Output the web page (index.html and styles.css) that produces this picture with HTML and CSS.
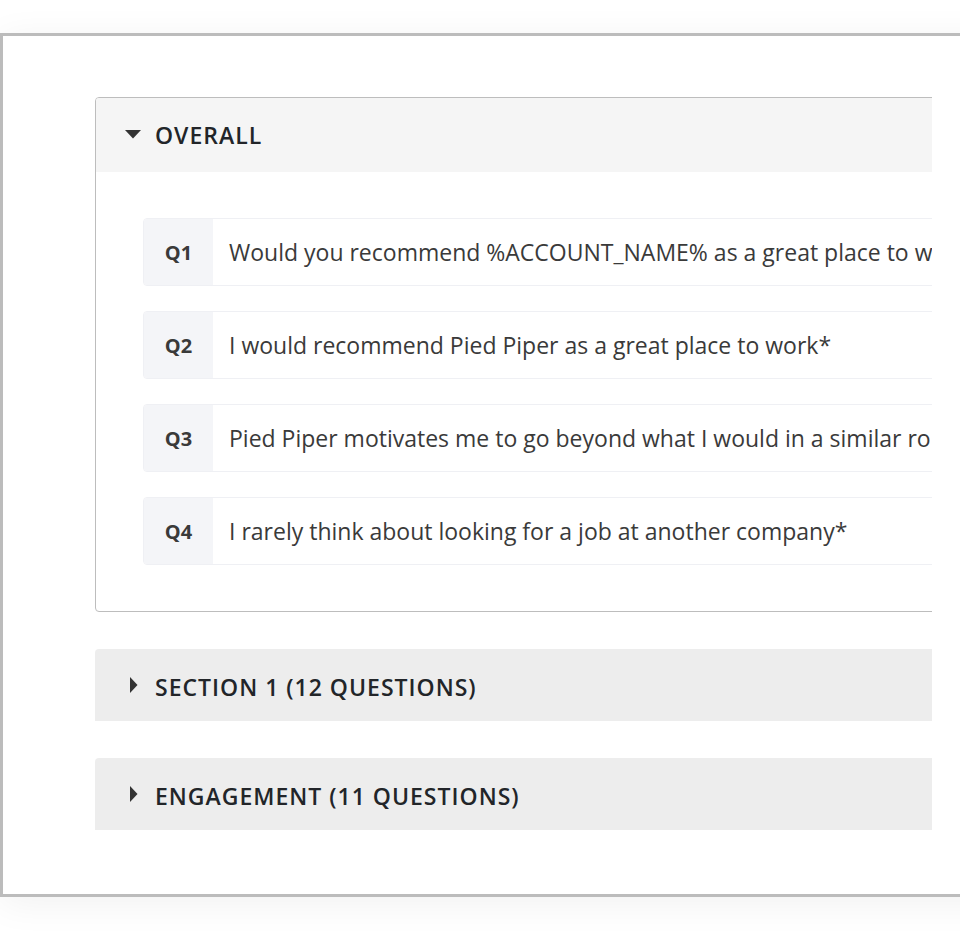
FILE: index.html
```html
<!DOCTYPE html>
<html>
<head>
<meta charset="utf-8">
<link rel="stylesheet" href="styles.css">
</head>
<body>
<div class="card">
  <div class="clip">
    <div class="panel open">
      <div class="panel-head">
        <svg class="caret-down" width="16" height="9" viewBox="0 0 16 9"><path d="M0 0H16L8 8.5Z" fill="#333"/></svg>
        <span class="panel-title">OVERALL</span>
      </div>
      <div class="panel-body">
        <div class="q-row"><div class="q-num">Q1</div><div class="q-text">Would you recommend %ACCOUNT_NAME% as a great place to work*</div></div>
        <div class="q-row"><div class="q-num">Q2</div><div class="q-text">I would recommend Pied Piper as a great place to work*</div></div>
        <div class="q-row"><div class="q-num">Q3</div><div class="q-text">Pied Piper motivates me to go beyond what I would in a similar role elsewhere*</div></div>
        <div class="q-row"><div class="q-num">Q4</div><div class="q-text">I rarely think about looking for a job at another company*</div></div>
      </div>
    </div>
    <div class="section">
      <svg class="caret-right" width="8" height="16" viewBox="0 0 8 16"><path d="M0 0V16L7.5 8Z" fill="#333"/></svg>
      <span class="panel-title">SECTION 1 (12 QUESTIONS)</span>
    </div>
    <div class="section">
      <svg class="caret-right" width="8" height="16" viewBox="0 0 8 16"><path d="M0 0V16L7.5 8Z" fill="#333"/></svg>
      <span class="panel-title">ENGAGEMENT (11 QUESTIONS)</span>
    </div>
  </div>
</div>
</body>
</html>
```
FILE: styles.css
```css
html, body {
  margin: 0;
  padding: 0;
  background: #ffffff;
  overflow: hidden;
  height: 948px;
}
body {
  font-family: "Open Sans", "Noto Sans", sans-serif;
  color: #333;
}
.card {
  margin-top: 33px;
  width: 1100px;
  border: 3px solid #bcbcbc;
  background: #fff;
  box-shadow: 0 6px 36px rgba(0, 0, 0, 0.06);
  padding: 61px 0 64px 92px;
  box-sizing: border-box;
}
.clip {
  width: 837px;
  overflow: hidden;
  display: flex;
  flex-direction: column;
  gap: 37px;
}
.panel {
  width: 1000px;
  border: 1px solid #bdbdbd;
  border-radius: 4px;
  overflow: hidden;
  flex-shrink: 0;
}
.panel-head {
  height: 74px;
  background: #f5f5f5;
  display: flex;
  align-items: center;
  padding-left: 29px;
  box-sizing: border-box;
}
.caret-down {
  margin-right: 14px;
  margin-top: -2px;
}
.panel-title {
  font-size: 23px;
  font-weight: 600;
  letter-spacing: 1px;
  color: #222529;
}
.panel-body {
  padding: 46px 0 46px 47px;
  display: flex;
  flex-direction: column;
  gap: 25px;
}
.q-row {
  display: flex;
  height: 68px;
  border: 1px solid #eff0f4;
  border-radius: 4px;
  box-sizing: border-box;
  overflow: hidden;
}
.q-num {
  width: 69px;
  flex-shrink: 0;
  background: #f4f5f8;
  display: flex;
  align-items: center;
  justify-content: center;
  font-size: 20px;
  font-weight: 700;
  color: #3a3a3a;
}
.q-text {
  display: flex;
  align-items: center;
  padding-left: 16px;
  font-size: 23px;
  color: #3a3a3a;
  white-space: nowrap;
}
.section {
  width: 1000px;
  height: 72px;
  flex-shrink: 0;
  background: #ededed;
  border-radius: 4px 4px 0 0;
  display: flex;
  align-items: center;
  padding-left: 35px;
  padding-top: 3px;
  box-sizing: border-box;
}
.caret-right {
  margin-right: 17px;
  margin-top: -3px;
}
```
